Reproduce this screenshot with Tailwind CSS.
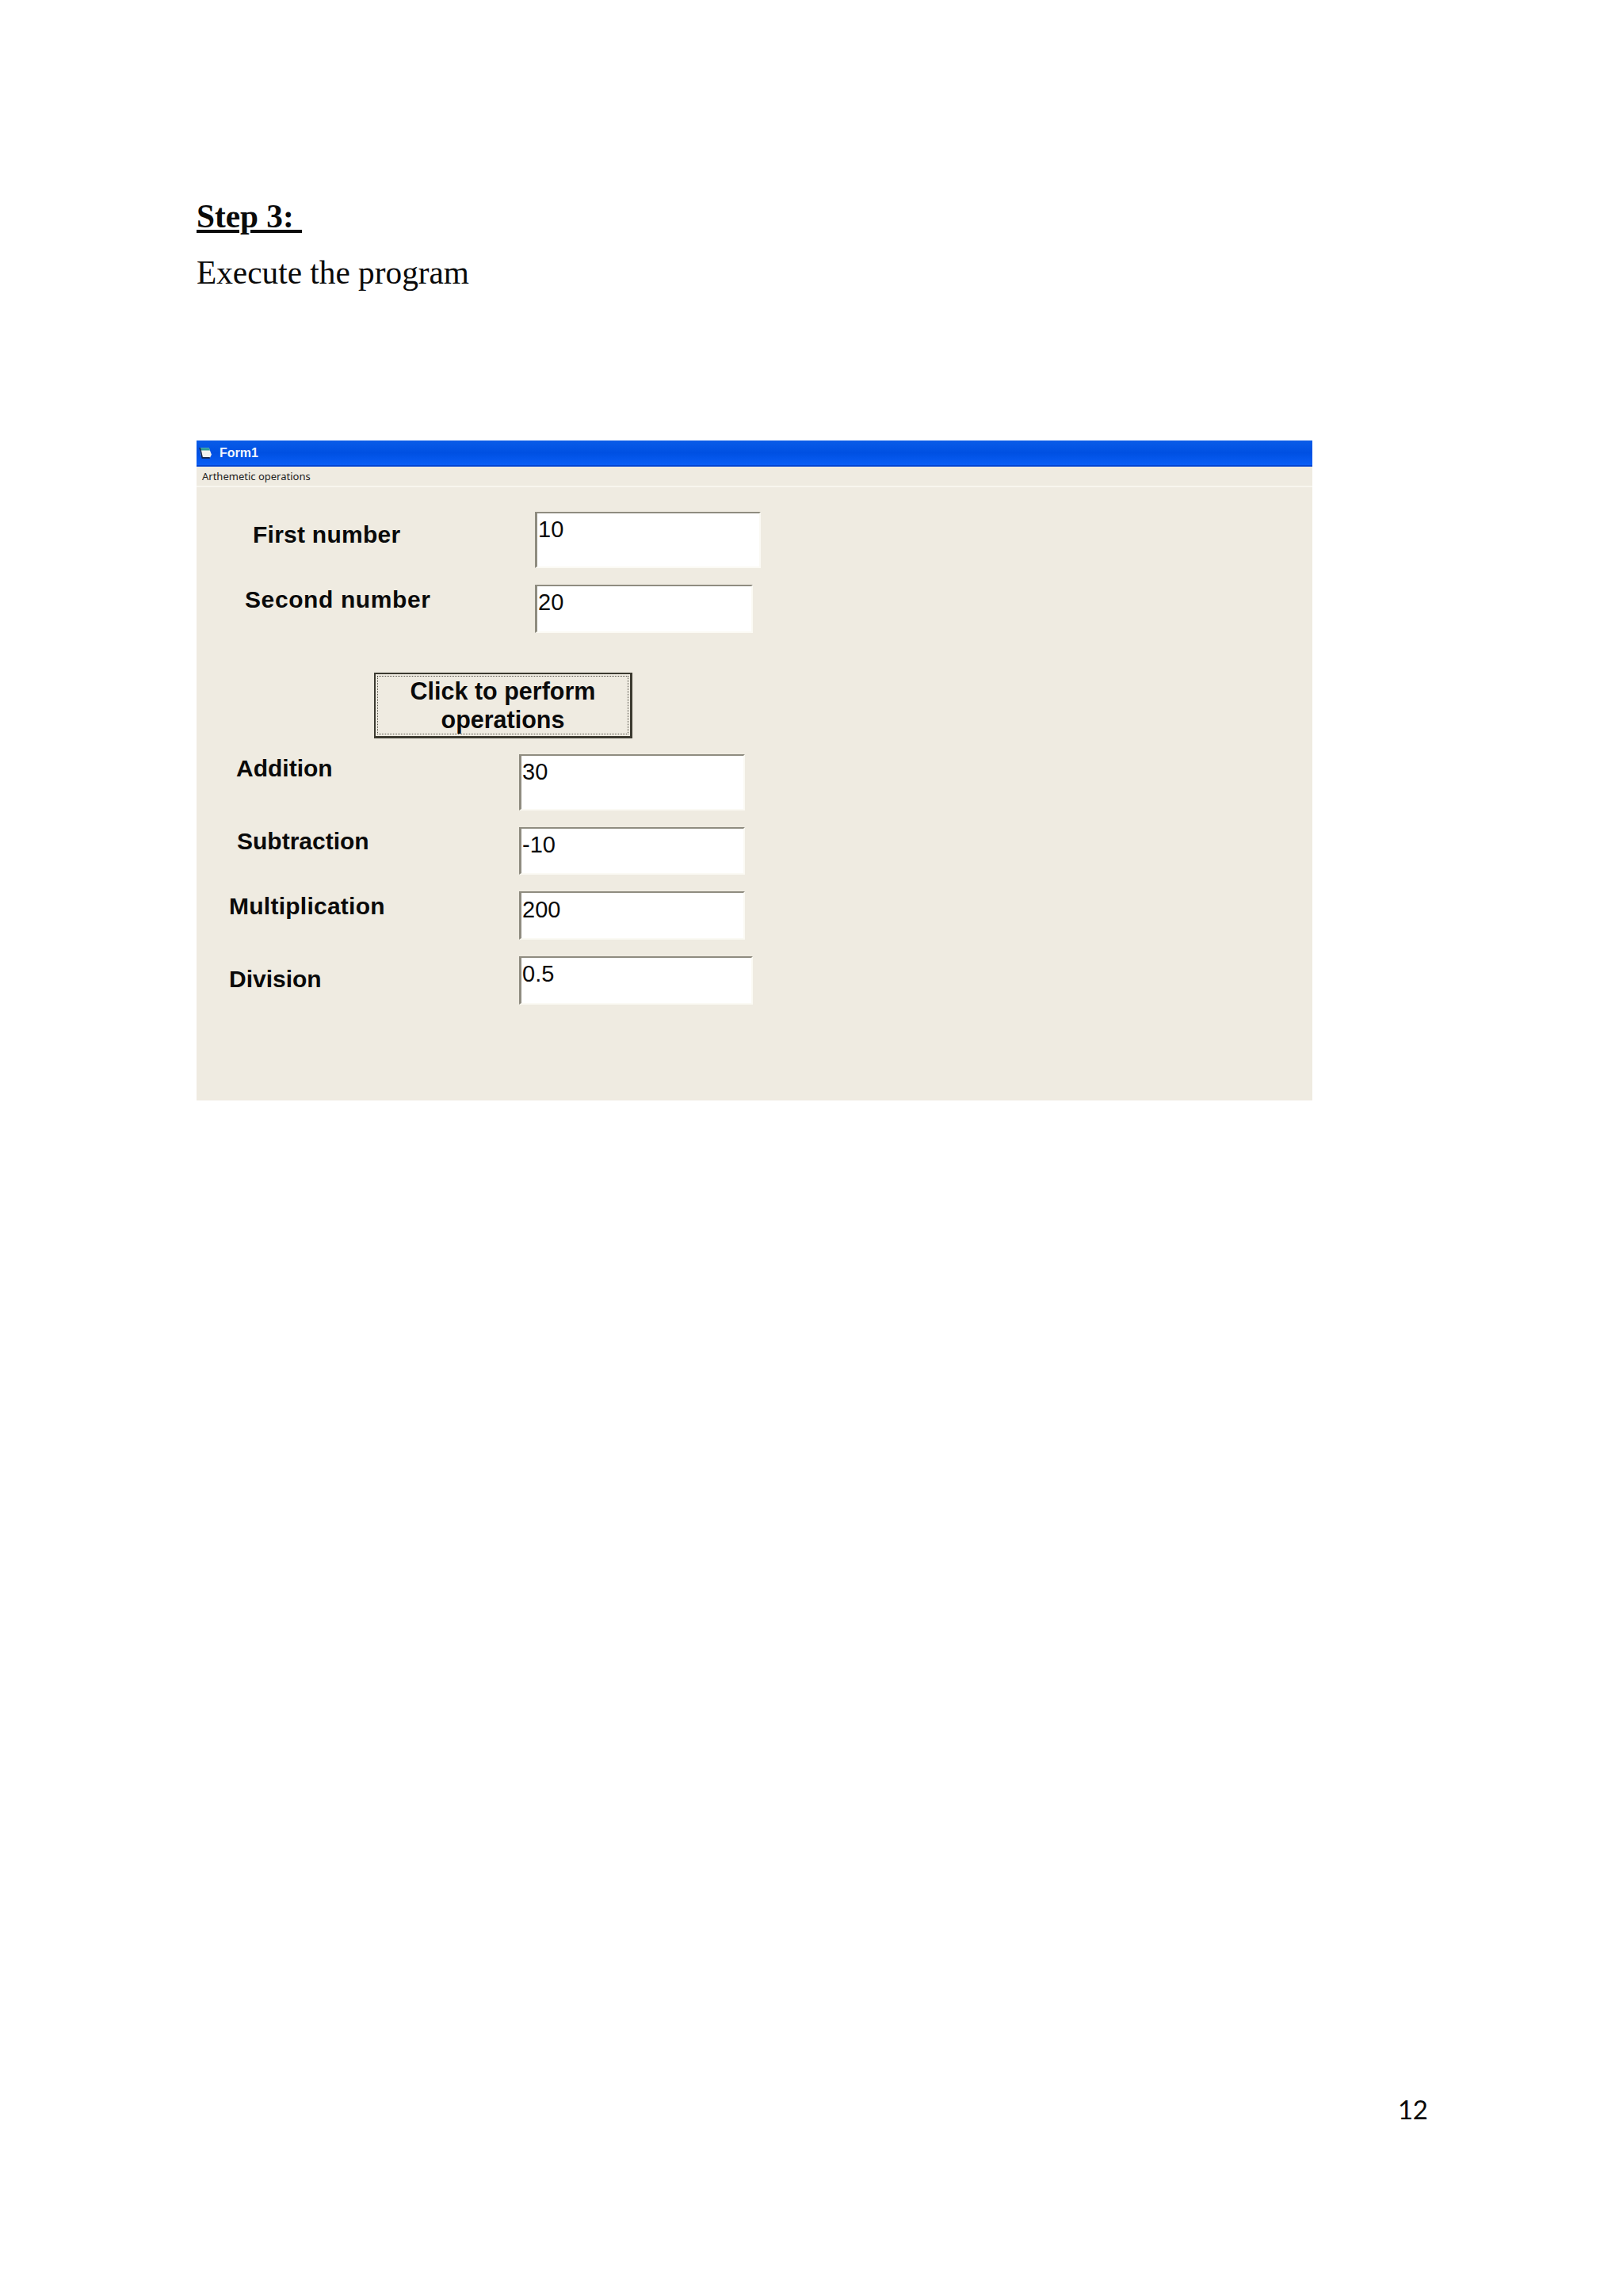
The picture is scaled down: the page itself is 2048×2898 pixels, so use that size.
<!DOCTYPE html>
<html lang="en">
<head>
<meta charset="utf-8">
<title>Step 3</title>
<script src="https://cdn.jsdelivr.net/npm/@tailwindcss/browser@4"></script>
</head>
<body class="bg-white">
<main class="w-[2048px] h-[2898px] overflow-hidden bg-white pl-[248px] pt-[250px] flex flex-col text-[#0a0a0a]">
  <h1 class="font-['Liberation_Serif',serif] text-[41.3px] leading-[46px] font-bold underline whitespace-pre">Step 3: </h1>
  <p class="font-['Liberation_Serif',serif] text-[41.3px] leading-[46px] mt-[25px]">Execute the program</p>

  <section class="mt-[189px] w-[1408px] h-[833px] bg-[#efebe1] flex flex-col font-['Liberation_Sans',sans-serif]">
    <div class="h-[33px] flex items-center pl-[3px] border-b-2 border-[#0344d0] bg-gradient-to-b from-[#0a5ce8] via-[#0050e2] to-[#0a5ef6]">
      <svg class="w-[17px] h-[15px] shrink-0" viewBox="0 0 16 14"><path d="M1 1h11l3 8-2 4H4L2 9z" fill="#f4f4f0"/><path d="M1 1h11l1.2 3.2H2z" fill="#2a9a9a"/><path d="M1 1l1.2 4L4 13h9" fill="none" stroke="#14244a" stroke-width="1.5"/></svg>
      <span class="ml-[9px] text-[16px] leading-[20px] font-bold text-[#f0f6ff]">Form1</span>
    </div>
    <div class="h-[24px] border-b-[2px] border-[#f8f6ee] pl-[7px] flex items-center box-content">
      <span class="font-['Noto_Sans',sans-serif] text-[13px] leading-[18px] text-[#1c1c1c]">Arthemetic operations</span>
    </div>

    <div class="flex items-start mt-[31px]">
      <div class="w-[427px] pl-[71px] pt-[12px] text-[30px] leading-[34px] font-bold tracking-[0.25px]">First number</div>
      <div class="w-[285px] h-[71px] bg-white border-t-2 border-l-[3px] border-r-2 border-b-2 border-t-[#8f8c80] border-l-[#8f8c80] border-r-[#fbfaf4] border-b-[#fbfaf4] pl-[1px] pt-[3px] text-[29px] leading-[34px]">10</div>
    </div>
    <div class="flex items-start mt-[21px]">
      <div class="w-[427px] pl-[61px] pt-[2px] text-[30px] leading-[34px] font-bold tracking-[0.6px]">Second number</div>
      <div class="w-[275px] h-[61px] bg-white border-t-2 border-l-[3px] border-r-2 border-b-2 border-t-[#8f8c80] border-l-[#8f8c80] border-r-[#fbfaf4] border-b-[#fbfaf4] pl-[1px] pt-[3px] text-[29px] leading-[34px]">20</div>
    </div>

    <div class="mt-[50px] ml-[224px] w-[326px] h-[83px] border-2 border-[#3c3a30] border-r-[3px] border-b-[3px] p-[2px]">
      <div class="h-full border border-dotted border-[#55534a] flex flex-col items-center justify-center text-[30.5px] leading-[36.5px] font-bold">
        <span>Click to perform</span>
        <span>operations</span>
      </div>
    </div>

    <div class="flex items-start mt-[20px]">
      <div class="w-[407px] pl-[50px] pt-[1px] text-[30px] leading-[34px] font-bold">Addition</div>
      <div class="w-[285px] h-[71px] bg-white border-t-2 border-l-[3px] border-r-2 border-b-2 border-t-[#8f8c80] border-l-[#8f8c80] border-r-[#fbfaf4] border-b-[#fbfaf4] pl-[1px] pt-[3px] text-[29px] leading-[34px]">30</div>
    </div>
    <div class="flex items-start mt-[21px]">
      <div class="w-[407px] pl-[51px] pt-[1px] text-[30px] leading-[34px] font-bold">Subtraction</div>
      <div class="w-[285px] h-[60px] bg-white border-t-2 border-l-[3px] border-r-2 border-b-2 border-t-[#8f8c80] border-l-[#8f8c80] border-r-[#fbfaf4] border-b-[#fbfaf4] pl-[1px] pt-[3px] text-[29px] leading-[34px]">-10</div>
    </div>
    <div class="flex items-start mt-[21px]">
      <div class="w-[407px] pl-[41px] pt-[2px] text-[30px] leading-[34px] font-bold tracking-[0.25px]">Multiplication</div>
      <div class="w-[285px] h-[61px] bg-white border-t-2 border-l-[3px] border-r-2 border-b-2 border-t-[#8f8c80] border-l-[#8f8c80] border-r-[#fbfaf4] border-b-[#fbfaf4] pl-[1px] pt-[4px] text-[29px] leading-[34px]">200</div>
    </div>
    <div class="flex items-start mt-[21px]">
      <div class="w-[407px] pl-[41px] pt-[12px] text-[30px] leading-[34px] font-bold">Division</div>
      <div class="w-[295px] h-[61px] bg-white border-t-2 border-l-[3px] border-r-2 border-b-2 border-t-[#8f8c80] border-l-[#8f8c80] border-r-[#fbfaf4] border-b-[#fbfaf4] pl-[1px] pt-[3px] text-[29px] leading-[34px]">0.5</div>
    </div>
  </section>

  <div class="mt-[1253px] ml-[1516px] w-[44px] font-['Lato',sans-serif] text-[33px] leading-[40px] tracking-[-0.5px]">12</div>
</main>
</body>
</html>
